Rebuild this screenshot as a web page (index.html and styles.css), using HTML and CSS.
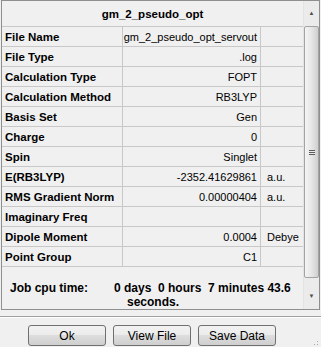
FILE: index.html
```html
<!DOCTYPE html>
<html lang="en">
<head>
  <meta charset="UTF-8" />
  <title>gm_2_pseudo_opt</title>
  <link rel="stylesheet" href="styles.css">
</head>
<body>
<div class="panel">
  <div class="content">
    <div class="title">gm_2_pseudo_opt</div>
    <table class="grid">
      <tr><td class="key">File Name</td><td class="val">gm_2_pseudo_opt_servout</td><td class="unit"></td></tr>
      <tr><td class="key">File Type</td><td class="val">.log</td><td class="unit"></td></tr>
      <tr><td class="key">Calculation Type</td><td class="val">FOPT</td><td class="unit"></td></tr>
      <tr><td class="key">Calculation Method</td><td class="val">RB3LYP</td><td class="unit"></td></tr>
      <tr><td class="key">Basis Set</td><td class="val">Gen</td><td class="unit"></td></tr>
      <tr><td class="key">Charge</td><td class="val">0</td><td class="unit"></td></tr>
      <tr><td class="key">Spin</td><td class="val">Singlet</td><td class="unit"></td></tr>
      <tr><td class="key">E(RB3LYP)</td><td class="val">-2352.41629861</td><td class="unit">a.u.</td></tr>
      <tr><td class="key">RMS Gradient Norm</td><td class="val">0.00000404</td><td class="unit">a.u.</td></tr>
      <tr><td class="key">Imaginary Freq</td><td class="val"></td><td class="unit"></td></tr>
      <tr><td class="key">Dipole Moment</td><td class="val">0.0004</td><td class="unit">Debye</td></tr>
      <tr><td class="key">Point Group</td><td class="val">C1</td><td class="unit"></td></tr>
    </table>
    <div class="job">
      <div class="job-label">Job cpu time:</div>
      <div class="job-value">
        <div class="job-line">0 days  0 hours  7 minutes 43.6</div>
        <div class="job-line job-wrap">seconds.</div>
      </div>
    </div>
  </div>
  <div class="scrollbar">
    <div class="arrow">&#9650;</div>
    <div class="track">
      <div class="thumb"><span class="grip"></span></div>
    </div>
    <div class="arrow">&#9660;</div>
  </div>
</div>
<div class="separator"></div>
<div class="buttons">
  <button>Ok</button>
  <button>View File</button>
  <button>Save Data</button>
  <span class="sizer"></span>
</div>
</body>
</html>
```

FILE: styles.css
```css
body {
  margin: 0;
  background-color: #f0f0f0;
  font-family: "Liberation Sans", Arial, sans-serif;
  font-size: 11px;
  color: #000;
  width: 321px;
  height: 347px;
  overflow: hidden;
}
.panel {
  display: flex;
  margin-left: 1px;
  width: 317px;
  height: 308px;
  border: 1px solid #8e8f8f;
}
.content {
  width: 301px;
  display: flex;
  flex-direction: column;
}
.title {
  height: 25px;
  line-height: 26px;
  text-align: center;
  font-weight: bold;
  font-size: 11.5px;
  border-bottom: 1px solid #c8c8c8;
}
.grid {
  border-collapse: collapse;
  width: 301px;
  table-layout: fixed;
}
.grid td {
  height: 19px;
  padding: 0;
  border-bottom: 1px solid #c8c8c8;
  white-space: nowrap;
  overflow: hidden;
}
.key {
  width: 117px;
  padding-left: 3px !important;
  font-weight: bold;
  font-size: 11.5px;
  border-right: 1px solid #c8c8c8;
}
.val {
  width: 134px;
  padding-right: 3px !important;
  text-align: right;
  border-right: 1px solid #c8c8c8;
}
.unit {
  padding-left: 6px !important;
}
.job {
  display: flex;
  font-weight: bold;
  font-size: 12px;
  padding-top: 14px;
  line-height: 14px;
}
.job-label {
  width: 104px;
  padding-left: 8px;
}
.job-line {
  white-space: pre;
}
.job-wrap {
  padding-left: 13px;
}
.scrollbar {
  width: 16px;
  display: flex;
  flex-direction: column;
  background-color: #ebebeb;
  border-left: 1px solid #e3e3e3;
  box-sizing: border-box;
}
.arrow {
  height: 25px;
  font-size: 6px;
  line-height: 25px;
  text-align: center;
  color: #4d4d4d;
}
.track {
  flex: 1;
}
.thumb {
  height: 250px;
  border: 1px solid #a3a3a3;
  border-radius: 2px;
  background: linear-gradient(to right, #f4f4f4, #e6e6e6 50%, #cfcfcf);
  display: flex;
  align-items: center;
  justify-content: center;
}
.grip {
  width: 6px;
  height: 5px;
  background: repeating-linear-gradient(to bottom, #5c5c5c 0, #5c5c5c 1px, #eaeaea 1px, #eaeaea 2px);
}
.separator {
  margin-top: 6px;
  height: 1px;
  background-color: #a0a0a0;
  border-bottom: 1px solid #fff;
}
.buttons {
  display: flex;
  gap: 7px;
  padding-left: 28px;
  margin-top: 7px;
  position: relative;
}
button {
  width: 78px;
  height: 21px;
  padding: 0;
  font-family: "Liberation Sans", Arial, sans-serif;
  font-size: 12px;
  color: #000;
  border: 1px solid #707070;
  border-radius: 3px;
  background: linear-gradient(to bottom, #f2f2f2 0, #ebebeb 50%, #dddddd 50%, #cfcfcf 100%);
}
.sizer {
  position: absolute;
  right: 3px;
  bottom: -2px;
  width: 8px;
  height: 8px;
  background:
    radial-gradient(circle, #a8a8a8 0.8px, transparent 1px) 0 0 / 3px 3px;
  clip-path: polygon(100% 0, 100% 100%, 0 100%);
}
```
